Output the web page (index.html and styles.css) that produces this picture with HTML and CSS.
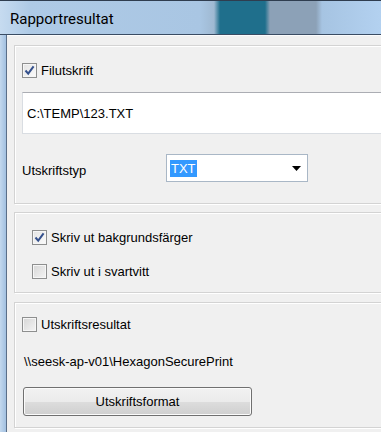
FILE: index.html
```html
<html>
  <head>
    <title>Rapportresultat</title>
    <link rel="stylesheet" href="styles.css">
  </head>
  <body>
    <div class="window">
      <header class="titlebar">
        <span class="title">Rapportresultat</span>
      </header>
      <div class="frame">
        <div class="frame-left"></div>
        <main class="client">
          <section class="panel panel-file">
            <label class="check-row">
              <span class="check checked">
                <svg width="13" height="13" viewBox="0 0 13 13">
                  <path d="M2.5 6.5 L5.2 9.6 L10.6 2.4" fill="none" stroke="#34508c" stroke-width="2" stroke-linejoin="miter"/>
                </svg>
              </span>
              Filutskrift
            </label>
            <div class="textbox">C:\TEMP\123.TXT</div>
            <div class="type-row">
              <span class="type-label">Utskriftstyp</span>
              <div class="select">
                <span class="selected">TXT</span>
                <svg class="arrow" width="9" height="5" viewBox="0 0 9 5">
                  <path d="M0 0 H9 L4.5 5 Z" fill="#000"/>
                </svg>
              </div>
            </div>
          </section>

          <section class="panel panel-colors">
            <label class="check-row">
              <span class="check checked">
                <svg width="13" height="13" viewBox="0 0 13 13">
                  <path d="M2.5 6.5 L5.2 9.6 L10.6 2.4" fill="none" stroke="#34508c" stroke-width="2" stroke-linejoin="miter"/>
                </svg>
              </span>
              Skriv ut bakgrundsfärger
            </label>
            <label class="check-row">
              <span class="check"></span>
              Skriv ut i svartvitt
            </label>
          </section>

          <section class="panel panel-printer">
            <label class="check-row">
              <span class="check"></span>
              Utskriftsresultat
            </label>
            <p class="printer-path">\\seesk-ap-v01\HexagonSecurePrint</p>
            <button class="format-button">Utskriftsformat</button>
          </section>
        </main>
      </div>
    </div>
  </body>
</html>
```

FILE: styles.css
```css
html,
body {
  padding: 0;
  margin: 0;
  font-family: "Liberation Sans", Arial, sans-serif;
  font-size: 13px;
  color: #000;
}

.window {
  width: 381px;
  height: 432px;
  overflow: hidden;
  background: #f0f0f0;
}

.titlebar {
  display: flex;
  align-items: center;
  box-sizing: border-box;
  height: 35px;
  padding: 3px 0 0 10px;
  border-top: 1px solid #2f3d4f;
  border-bottom: 1px solid #3a4c63;
  background: linear-gradient(
    to right,
    #c6dbf0 0,
    #aecae6 30px,
    #a9c6e3 200px,
    #9fb9d2 214px,
    #1f6f8c 220px,
    #1f6f8c 265px,
    #8ca1b7 270px,
    #8ca1b7 316px,
    #a6c4e2 322px,
    #b3d1f0 381px
  );
}

.title {
  font-family: Roboto, "Noto Sans", sans-serif;
  font-size: 15px;
  color: #000;
}

.frame {
  display: flex;
  height: 397px;
}

.frame-left {
  width: 6px;
  background: linear-gradient(to right, #c3d8ee, #a2c0e0);
  border-right: 1px solid #5a6e88;
}

.client {
  flex: 1;
  display: flex;
  flex-direction: column;
  padding: 9px 0 0 7px;
  border-top: 1px solid #fbfcfd;
}

.panel {
  box-sizing: border-box;
  margin-right: -20px;
  border: 1px solid #d3d3d3;
  box-shadow: inset 1px 1px 0 #fff, 1px 1px 0 #fff;
}

.panel-file {
  height: 159px;
  padding: 17px 0 0 7px;
}

.panel-colors {
  height: 81px;
  margin-top: 8px;
  padding: 17px 0 0 17px;
}

.panel-printer {
  height: 126px;
  margin-top: 9px;
  padding: 14px 0 0 7px;
}

.check-row {
  display: flex;
  align-items: center;
  gap: 4px;
  height: 15px;
}

.panel-colors .check-row + .check-row {
  margin-top: 19px;
}

.check {
  display: flex;
  justify-content: center;
  align-items: center;
  box-sizing: border-box;
  width: 15px;
  height: 15px;
  border: 1px solid #8e8f8f;
  background: linear-gradient(135deg, #d6d6d6, #f4f4f4);
  box-shadow: inset 0 0 0 1px #f6f6f6;
}

.check.checked {
  background: linear-gradient(135deg, #e3e3e3, #fbfbfb);
}

.textbox {
  display: flex;
  align-items: center;
  box-sizing: border-box;
  height: 42px;
  margin-top: 14px;
  padding-left: 4px;
  background: #fff;
  border: 1px solid #d9dde2;
  border-top-color: #abadb3;
}

.type-row {
  display: flex;
  align-items: center;
  margin-top: 20px;
}

.type-label {
  width: 144px;
  padding-top: 4px;
}

.select {
  display: flex;
  align-items: center;
  justify-content: space-between;
  box-sizing: border-box;
  width: 142px;
  height: 28px;
  padding: 0 6px 0 3px;
  background: #fff;
  border: 1px solid #a9b7c6;
}

.selected {
  padding: 1px 1px;
  line-height: 15px;
  background: #3399ff;
  color: #fff;
}

.printer-path {
  margin: 22px 0 0 2px;
}

.format-button {
  display: block;
  width: 229px;
  height: 29px;
  margin: 18px 0 0 1px;
  font-family: "Liberation Sans", Arial, sans-serif;
  font-size: 13px;
  color: #000;
  border: 1px solid #707070;
  border-radius: 3px;
  background: linear-gradient(#f2f2f2 0%, #ebebeb 50%, #dddddd 50%, #cfcfcf 100%);
  box-shadow: inset 0 0 0 1px #fbfbfb;
}
```
